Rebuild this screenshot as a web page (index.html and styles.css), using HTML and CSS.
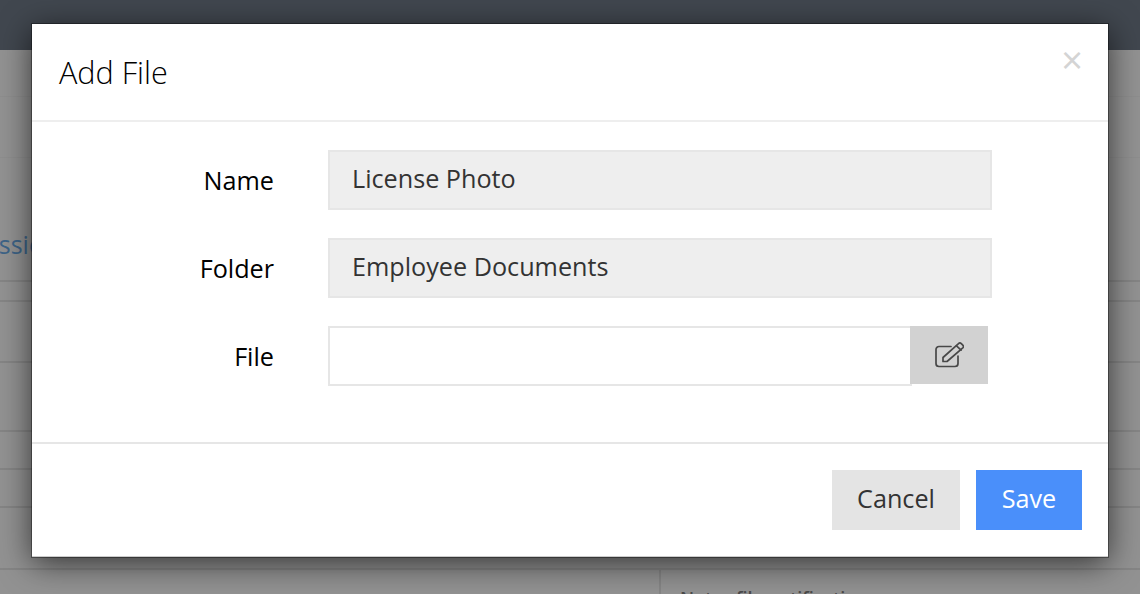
FILE: index.html
```html
<!DOCTYPE html>
<html lang="en">
<head>
<meta charset="utf-8">
<title>Add File</title>
<link rel="stylesheet" href="styles.css">
</head>
<body>
<div class="page">
  <div class="topbar"></div>
  <div class="band band-a"></div>
  <div class="band band-b"></div>
  <div class="heading-row"><span class="heading-text">Permissions</span></div>
  <div class="row row-20"></div>
  <div class="row row-61"></div>
  <div class="row row-69"></div>
  <div class="row row-38"></div>
  <div class="row row-38"></div>
  <div class="row row-62"></div>
  <div class="tail"><span class="tail-text">Notes file notification</span></div>
</div>
<div class="modal">
  <header class="modal-header">
    <h1 class="modal-title">Add File</h1>
    <span class="close">&times;</span>
  </header>
  <form class="modal-body">
    <div class="field">
      <label class="field-label">Name</label>
      <div class="input input-disabled">License Photo</div>
    </div>
    <div class="field">
      <label class="field-label">Folder</label>
      <div class="input input-disabled">Employee Documents</div>
    </div>
    <div class="field">
      <label class="field-label">File</label>
      <div class="file-group">
        <div class="input input-file"></div>
        <button type="button" class="file-button" aria-label="Choose file">
          <svg class="edit-icon" viewBox="0 0 30 26" width="30" height="26" fill="none" stroke="#484848" stroke-width="1.7" stroke-linejoin="round" stroke-linecap="round">
            <path d="M17 4.5H5a3 3 0 0 0-3 3v14a3 3 0 0 0 3 3h16a3 3 0 0 0 3-3V14"/>
            <path d="M9 19.5v-4L24.5 1.6a2 2 0 0 1 2.8 0l1.5 1.5a2 2 0 0 1 0 2.8L13 19.5H9z"/>
            <path d="M22.5 3.8l4.6 4.4"/>
          </svg>
        </button>
      </div>
    </div>
  </form>
  <footer class="modal-footer">
    <button type="button" class="btn btn-cancel">Cancel</button>
    <button type="button" class="btn btn-save">Save</button>
  </footer>
</div>
</body>
</html>
```
FILE: styles.css
```css
* { box-sizing: border-box; }

html, body {
  margin: 0;
  height: 100%;
  overflow: hidden;
}

body {
  font-family: "Open Sans", "Liberation Sans", sans-serif;
  background: #929292;
}

.page {
  height: 594px;
  overflow: hidden;
}

.topbar {
  height: 50px;
  background: #41474f;
}

.band-a {
  height: 47px;
  border-bottom: 1px solid #8e8e8e;
}

.band-b {
  height: 61px;
  border-bottom: 1px solid #8e8e8e;
}

.heading-row {
  height: 124px;
  padding-top: 66px;
  border-bottom: 2px solid #858585;
  overflow: hidden;
}

.heading-text {
  display: block;
  margin-left: -70px;
  font-size: 25px;
  line-height: 40px;
  color: #3d6488;
  white-space: nowrap;
}

.row {
  border-bottom: 2px solid #858585;
}

.row-20 { height: 20px; }
.row-61 { height: 61px; }
.row-69 { height: 69px; }
.row-38 { height: 38px; }
.row-62 { height: 62px; }

.tail {
  height: 24px;
  padding: 16px 0 0 680px;
  background: linear-gradient(#858585, #858585) no-repeat 659px 0 / 2px 100%;
}

.tail-text {
  display: block;
  font-size: 18px;
  font-weight: 600;
  line-height: 24px;
  color: #4a4a4a;
  white-space: nowrap;
}

.modal {
  position: absolute;
  top: 24px;
  left: 32px;
  width: 1076px;
  height: 533px;
  display: flex;
  flex-direction: column;
  background: #fff;
  box-shadow: inset 0 -1px 0 #ccc, 0 0 0 1px rgba(0, 0, 0, .35), 0 6px 30px rgba(0, 0, 0, .65);
}

.modal-header {
  position: relative;
  height: 98px;
  padding: 26px 27px 0;
  border-bottom: 2px solid #eee;
}

.modal-title {
  margin: 0;
  font-size: 30.6px;
  font-weight: 300;
  line-height: 44px;
  color: #000;
}

.close {
  position: absolute;
  top: 11px;
  right: 25px;
  font-size: 38px;
  line-height: 48px;
  color: #d4d4d4;
}

.modal-body {
  flex: 1;
  display: flex;
  flex-direction: column;
  gap: 28px;
  padding-top: 28px;
}

.field {
  display: flex;
  align-items: center;
  height: 60px;
}

.field-label {
  width: 242px;
  font-size: 25.2px;
  text-align: right;
  color: #000;
}

.input {
  height: 60px;
  margin-left: 54px;
  border: 2px solid #e6e6e6;
  font-size: 25.2px;
  line-height: 52px;
  color: #333;
}

.input-disabled {
  width: 664px;
  padding-left: 22px;
  background: #eee;
}

.file-group {
  display: flex;
  align-items: flex-start;
  margin-left: 54px;
}

.input-file {
  width: 584px;
  margin: 0;
  background: #fff;
}

.file-button {
  display: flex;
  align-items: center;
  justify-content: center;
  width: 78px;
  height: 58px;
  margin-left: -2px;
  padding: 0;
  border: 0;
  background: #d2d2d2;
}

.modal-footer {
  display: flex;
  justify-content: flex-end;
  gap: 16px;
  height: 115px;
  padding: 26px 26px 0 0;
  border-top: 2px solid #e6e6e6;
}

.btn {
  height: 60px;
  padding: 0 0 4px;
  border: 0;
  font-family: inherit;
  font-size: 25.2px;
}

.btn-cancel {
  width: 128px;
  background: #e4e4e4;
  color: #333;
}

.btn-save {
  width: 106px;
  background: #4a8ffa;
  color: #fff;
}
```
